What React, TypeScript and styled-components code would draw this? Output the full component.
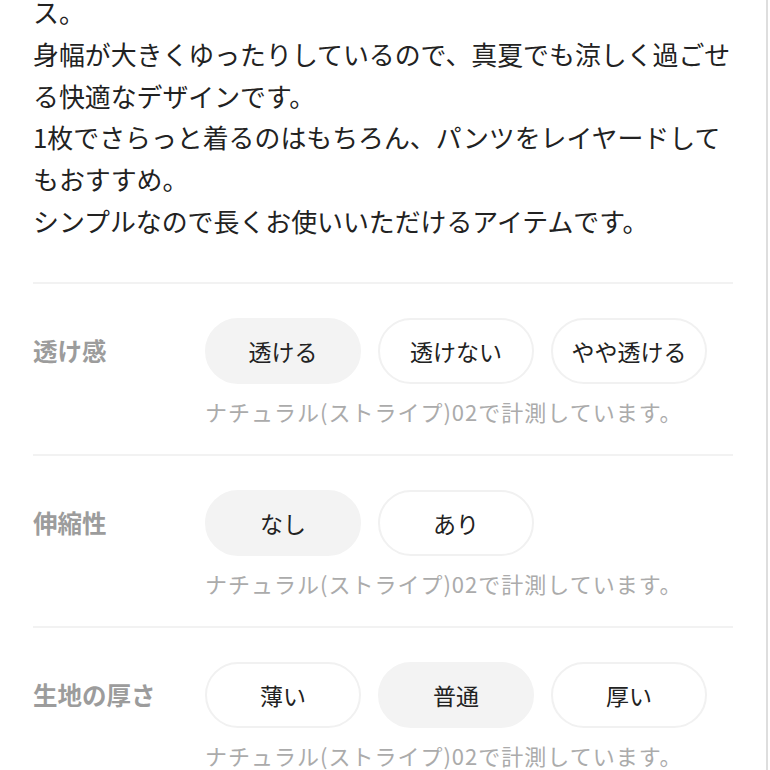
import React from "react";
import styled, { createGlobalStyle } from "styled-components";

const GlobalStyle = createGlobalStyle`
  * { margin:0; padding:0; box-sizing:border-box; }
  html, body {
    width:100%;
    height:100%;
    background:#fff;
    overflow:hidden;
    font-family:"Noto Sans CJK JP", "Noto Sans", sans-serif;
  }
`;

const Page = styled.div`
  width: 768px;
  height: 770px;
  border-right: 2px solid #dedede;
  padding: 0 33px;
  overflow: hidden;
`;

const Description = styled.p`
  margin-top: -9px;
  padding-bottom: 40px;
  font-size: 25.9px;
  line-height: 41.8px;
  color: #222;
  white-space: nowrap;
  border-bottom: 2px solid #f2f2f2;
`;

const Section = styled.section`
  display: grid;
  grid-template-columns: 172px 1fr;
  padding: 34px 0 28px;
  border-bottom: 2px solid #f2f2f2;
`;

const Label = styled.div`
  height: 66px;
  display: flex;
  align-items: center;
  font-size: 24.5px;
  font-weight: 700;
  color: #9c9c9c;
`;

const Options = styled.div`
  display: flex;
  gap: 17px;
`;

const Pill = styled.div<{ $active?: boolean }>`
  width: 156px;
  height: 66px;
  border-radius: 33px;
  display: flex;
  align-items: center;
  justify-content: center;
  font-size: 23px;
  color: #222;
  background: ${({ $active }) => ($active ? "#f3f3f3" : "#fff")};
  border: 2px solid ${({ $active }) => ($active ? "#f3f3f3" : "#f1f1f1")};
`;

const Note = styled.div`
  grid-column: 2;
  margin-top: 12px;
  font-size: 22px;
  line-height: 30px;
  letter-spacing: 1px;
  color: #ababab;
  white-space: nowrap;
`;

const specs = [
  { label: "透け感", options: ["透ける", "透けない", "やや透ける"], active: 0 },
  { label: "伸縮性", options: ["なし", "あり"], active: 0 },
  { label: "生地の厚さ", options: ["薄い", "普通", "厚い"], active: 1 },
];

const App = () => {
  return (
    <>
      <GlobalStyle />
      <Page>
        <Description>
          ス。
          <br />
          身幅が大きくゆったりしているので、真夏でも涼しく過ごせ
          <br />
          る快適なデザインです。
          <br />
          1枚でさらっと着るのはもちろん、パンツをレイヤードして
          <br />
          もおすすめ。
          <br />
          シンプルなので長くお使いいただけるアイテムです。
        </Description>

        {specs.map((s) => (
          <Section key={s.label}>
            <Label>{s.label}</Label>
            <Options>
              {s.options.map((o, i) => (
                <Pill key={o} $active={i === s.active}>
                  {o}
                </Pill>
              ))}
            </Options>
            <Note>ナチュラル(ストライプ)02で計測しています。</Note>
          </Section>
        ))}
      </Page>
    </>
  );
};

export default App;
